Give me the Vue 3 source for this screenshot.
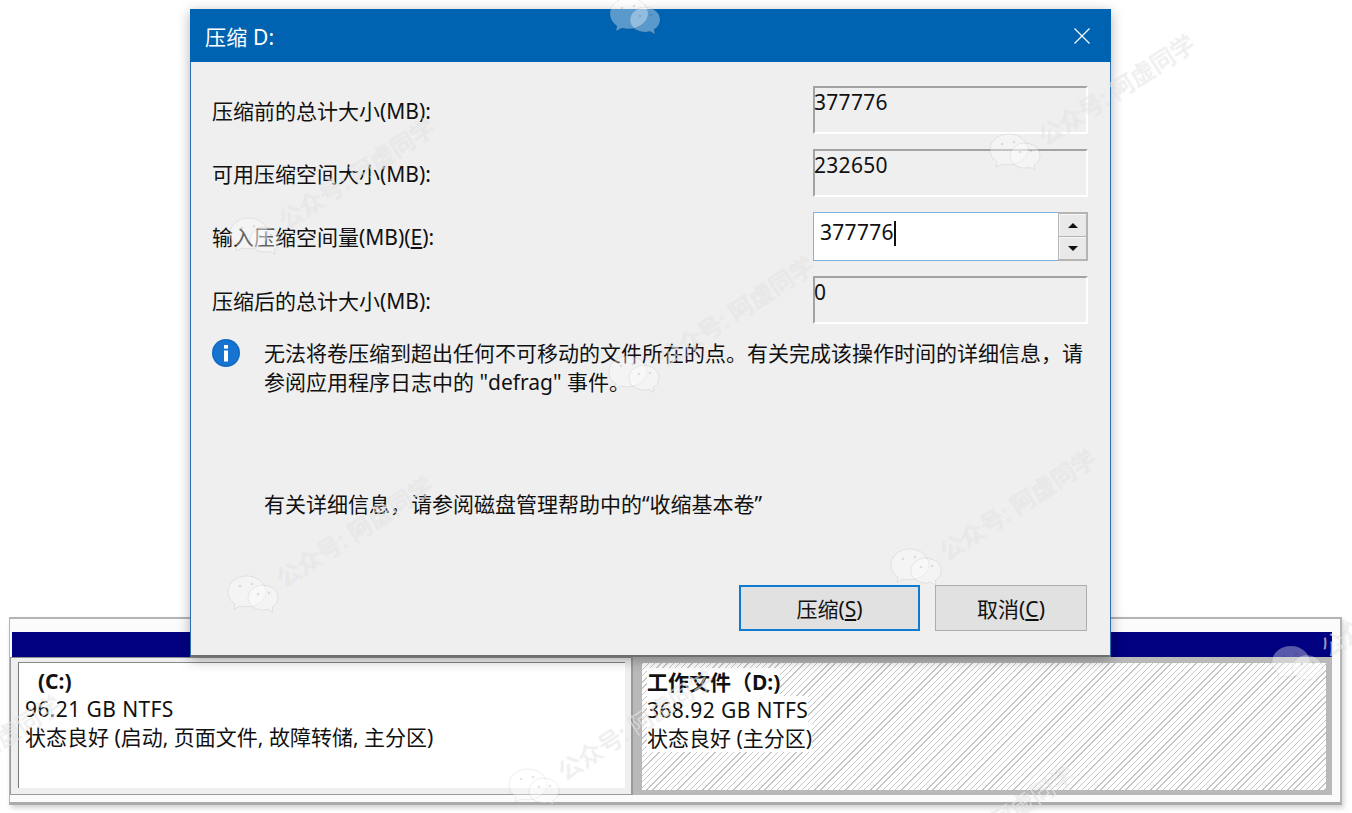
<script setup>
const marks = [
  { x: 608, y: -3, bare: true },
  { x: 228, y: 217 },
  { x: 988, y: 133 },
  { x: 607, y: 355 },
  { x: 226, y: 575 },
  { x: 889, y: 548 },
  { x: 507, y: 768 },
  { x: 1270, y: 645 },
  { x: 868, y: 864 },
  { x: -146, y: 794 }
]
const fields = [
  { label: '压缩前的总计大小(MB):', value: '377776' },
  { label: '可用压缩空间大小(MB):', value: '232650' },
  { label: '输入压缩空间量(MB)', value: '377776', input: true },
  { label: '压缩后的总计大小(MB):', value: '0' }
]
</script>

<template>
  <div class="page">
    <section class="dialog">
      <header class="titlebar">
        <span>压缩 D:</span>
        <svg class="close" viewBox="0 0 16 16" width="16" height="16">
          <path d="M.5.5l15 15M15.500.5l-15 15" stroke="#fff" stroke-width="1.2" fill="none" />
        </svg>
      </header>
      <div class="body">
        <div class="grid">
          <template v-for="f in fields" :key="f.label">
            <div class="label">{{ f.label }}<template v-if="f.input">(<u>E</u>):</template></div>
            <div v-if="f.input" class="spin">
              <div class="input">{{ f.value }}<i class="caret"></i></div>
              <div class="spinbtns">
                <div class="sbtn"><b class="up"></b></div>
                <div class="sbtn"><b class="down"></b></div>
              </div>
            </div>
            <div v-else class="static">{{ f.value }}</div>
          </template>
        </div>
        <div class="msg">
          <svg class="info" viewBox="0 0 28 28" width="28" height="28">
            <circle cx="14" cy="14" r="14" fill="#0f69c0" />
            <circle cx="14" cy="14" r="12.6" fill="#1673cf" />
            <rect x="12" y="6" width="4" height="3.600" fill="#fff" />
            <rect x="12" y="11.500" width="4" height="11" fill="#fff" />
          </svg>
          <p>无法将卷压缩到超出任何不可移动的文件所在的点。有关完成该操作时间的详细信息，请<br />参阅应用程序日志中的 "defrag" 事件。</p>
        </div>
        <p class="help">有关详细信息，请参阅磁盘管理帮助中的“收缩基本卷”</p>
        <div class="actions">
          <button class="btn primary">压缩(<u>S</u>)</button>
          <button class="btn cancel">取消(<u>C</u>)</button>
        </div>
      </div>
    </section>

    <section class="disk">
      <div class="bar"></div>
      <div class="parts">
        <div class="part-c">
          <div class="c-inner">
            <div class="name c-name">(C:)</div>
            <div class="size">96.21 GB NTFS</div>
            <div>状态良好 (启动, 页面文件, 故障转储, 主分区)</div>
          </div>
        </div>
        <div class="part-d">
          <div class="hatch">
            <div class="name"><span>工作文件（D:)</span></div>
            <div class="size"><span>368.92 GB NTFS</span></div>
            <div><span>状态良好 (主分区)</span></div>
          </div>
        </div>
      </div>
    </section>

    <div
      v-for="(m, i) in marks"
      :key="i"
      class="mark"
      :style="{ left: m.x + 'px', top: m.y + 'px' }"
    >
      <svg viewBox="0 0 54 38" width="54" height="38">
        <path d="M21 1C10 1 2 8 2 17c0 5 3 9 7 12l-1 5 6-3c2 .5 4 .8 7 .8 10 0 19-7 19-15S32 1 21 1z" class="bubble" />
        <path d="M37 10c-8 0-15 6-15 13s7 12 15 12c2 0 3-.2 5-.7l5 3-1-5c4-2 6-6 6-10 0-7-7-12-15-12z" class="bubble" />
        <circle cx="14" cy="11" r="1.300" class="eye" />
        <circle cx="26" cy="9" r="1.300" class="eye" />
        <circle cx="32" cy="19" r="1.300" class="eye" />
        <circle cx="43" cy="18" r="1.300" class="eye" />
      </svg>
      <span v-if="!m.bare">公众号: 阿虚同学</span>
    </div>
  </div>
</template>

<style scoped>
.page {
  position: relative;
  width: 1352px;
  height: 813px;
  overflow: hidden;
  background: #fff;
  color: #111;
  font-family: "Noto Sans", "Noto Sans CJK SC", sans-serif;
  font-size: 21px;
  display: flex;
  flex-direction: column;
}
.dialog {
  position: relative;
  z-index: 2;
  box-sizing: border-box;
  width: 921px;
  height: 648px;
  margin: 9px 0 0 190px;
  flex: none;
  display: flex;
  flex-direction: column;
  background: #efefef;
  border: 1px solid #2c6cb0;
  border-top: 0;
  border-bottom: 2px solid #6e6e6e;
  box-shadow: 0 3px 12px rgba(0, 0, 0, 0.3);
}
.titlebar {
  flex: none;
  height: 53px;
  margin: 0 -1px;
  padding: 0 21px 0 15px;
  display: flex;
  align-items: center;
  justify-content: space-between;
  background: #0063b1;
  color: #fff;
}
.titlebar span {
  letter-spacing: 0.2px;
}
.body {
  flex: 1;
  display: flex;
  flex-direction: column;
  padding: 24px 21px 24px 21px;
}
.grid {
  display: grid;
  grid-template-columns: 1fr 275px;
  grid-template-rows: 48px 48px 49px 48px;
  row-gap: 15px;
  margin-right: 1px;
}
.label {
  padding-top: 8px;
  line-height: 34px;
  white-space: nowrap;
}
.static {
  box-sizing: border-box;
  border-style: solid;
  border-width: 2px;
  border-color: #a3a3a3 #fff #fff #a3a3a3;
  line-height: 28px;
  letter-spacing: 0.3px;
  text-indent: -1px;
}
.spin {
  display: flex;
}
.input {
  box-sizing: border-box;
  width: 245px;
  border: 1px solid #7db2e4;
  border-right: 0;
  background: #fff;
  padding-left: 6px;
  line-height: 38px;
  letter-spacing: 0.3px;
  display: flex;
  align-items: flex-start;
}
.caret {
  width: 2px;
  height: 25px;
  margin: 8px 0 0 0;
  background: #111;
}
.spinbtns {
  flex: 1;
  box-sizing: border-box;
  border: 2px solid #b4b4b4;
  border-left-width: 1px;
  display: flex;
  flex-direction: column;
  background: #b4b4b4;
  gap: 1px;
}
.sbtn {
  flex: 1;
  background: #e9e9e9;
  display: flex;
  align-items: center;
  justify-content: center;
  border-left: 1px solid #f6f6f6;
  border-top: 1px solid #f6f6f6;
}
.up,
.down {
  width: 0;
  height: 0;
  border-left: 5px solid transparent;
  border-right: 5px solid transparent;
}
.up {
  border-bottom: 5px solid #111;
}
.down {
  border-top: 5px solid #111;
}
.msg {
  display: flex;
  gap: 24px;
  margin-top: 15px;
}
.info {
  flex: none;
}
.msg p {
  margin: 0;
  line-height: 29px;
  white-space: nowrap;
}
.help {
  margin: 93px 0 0 52px;
  line-height: 29px;
}
.actions {
  margin-top: auto;
  padding-right: 2px;
  display: flex;
  justify-content: flex-end;
  gap: 15px;
}
.btn {
  box-sizing: border-box;
  height: 46px;
  font: inherit;
  color: inherit;
  background: #e1e1e1;
  border: 1px solid #adadad;
  padding: 0;
}
.primary {
  width: 181px;
  border: 2px solid #0f7bd0;
}
.cancel {
  width: 152px;
}
.disk {
  position: relative;
  z-index: 1;
  box-sizing: border-box;
  flex: none;
  width: 1333px;
  height: 188px;
  margin: -40px 0 0 9px;
  padding-top: 13px;
  background: #fbfbfb;
  border-top: 2px solid #b4b4b4;
  border-bottom: 3px solid #ababab;
  border-left: 1px solid #b4b4b4;
  border-right: 2px solid #b4b4b4;
  box-shadow: 2px 3px 5px rgba(0, 0, 0, 0.18);
}
.bar {
  height: 25px;
  margin: 0 8px 0 2px;
  background: #000080;
}
.parts {
  display: flex;
  height: 138px;
  margin-right: 8px;
}
.part-c {
  box-sizing: border-box;
  width: 623px;
  flex: none;
  padding: 4px 6px 6px 7px;
  background: #efefef;
  border: 1px solid #9a9a9a;
  border-top: 1px solid #8f8f8f;
  border-right: 2px solid #9a9a9a;
}
.c-inner {
  height: 100%;
  box-sizing: border-box;
  background: #fff;
  border-left: 1px solid #777;
  border-top: 1px solid #888;
  padding: 4px 0 0 6px;
  line-height: 28px;
  white-space: nowrap;
}
.name {
  font-weight: 700;
}
.c-name {
  padding-left: 13px;
}
.size {
  letter-spacing: 0.4px;
}
.part-d {
  flex: 1;
  box-sizing: border-box;
  padding: 6px 6px 5px 9px;
  background: #b9b9b9;
}
.hatch {
  height: 100%;
  box-sizing: border-box;
  padding: 5px 0 0 5px;
  line-height: 28px;
  white-space: nowrap;
  background: #fff repeating-linear-gradient(
    135deg,
    #c6c6c6 0,
    #c6c6c6 1px,
    #fff 1px,
    #fff 4.4px
  );
}
.hatch span {
  background: #fff;
  display: inline-block;
}
.mark {
  position: absolute;
  z-index: 3;
  width: 54px;
  height: 38px;
  pointer-events: none;
}
.mark svg {
  display: block;
}
.bubble {
  fill: rgba(255, 255, 255, 0.35);
  stroke: rgba(0, 0, 0, 0.07);
  stroke-width: 1;
}
.eye {
  fill: rgba(0, 0, 0, 0.1);
}
.mark span {
  position: absolute;
  left: 53px;
  top: -8px;
  line-height: 28px;
  font-size: 24px;
  white-space: nowrap;
  color: rgba(255, 255, 255, 0.6);
  text-shadow: 0 0 1px rgba(0, 0, 0, 0.16);
  transform: rotate(-33deg);
  transform-origin: 0 50%;
}
</style>
